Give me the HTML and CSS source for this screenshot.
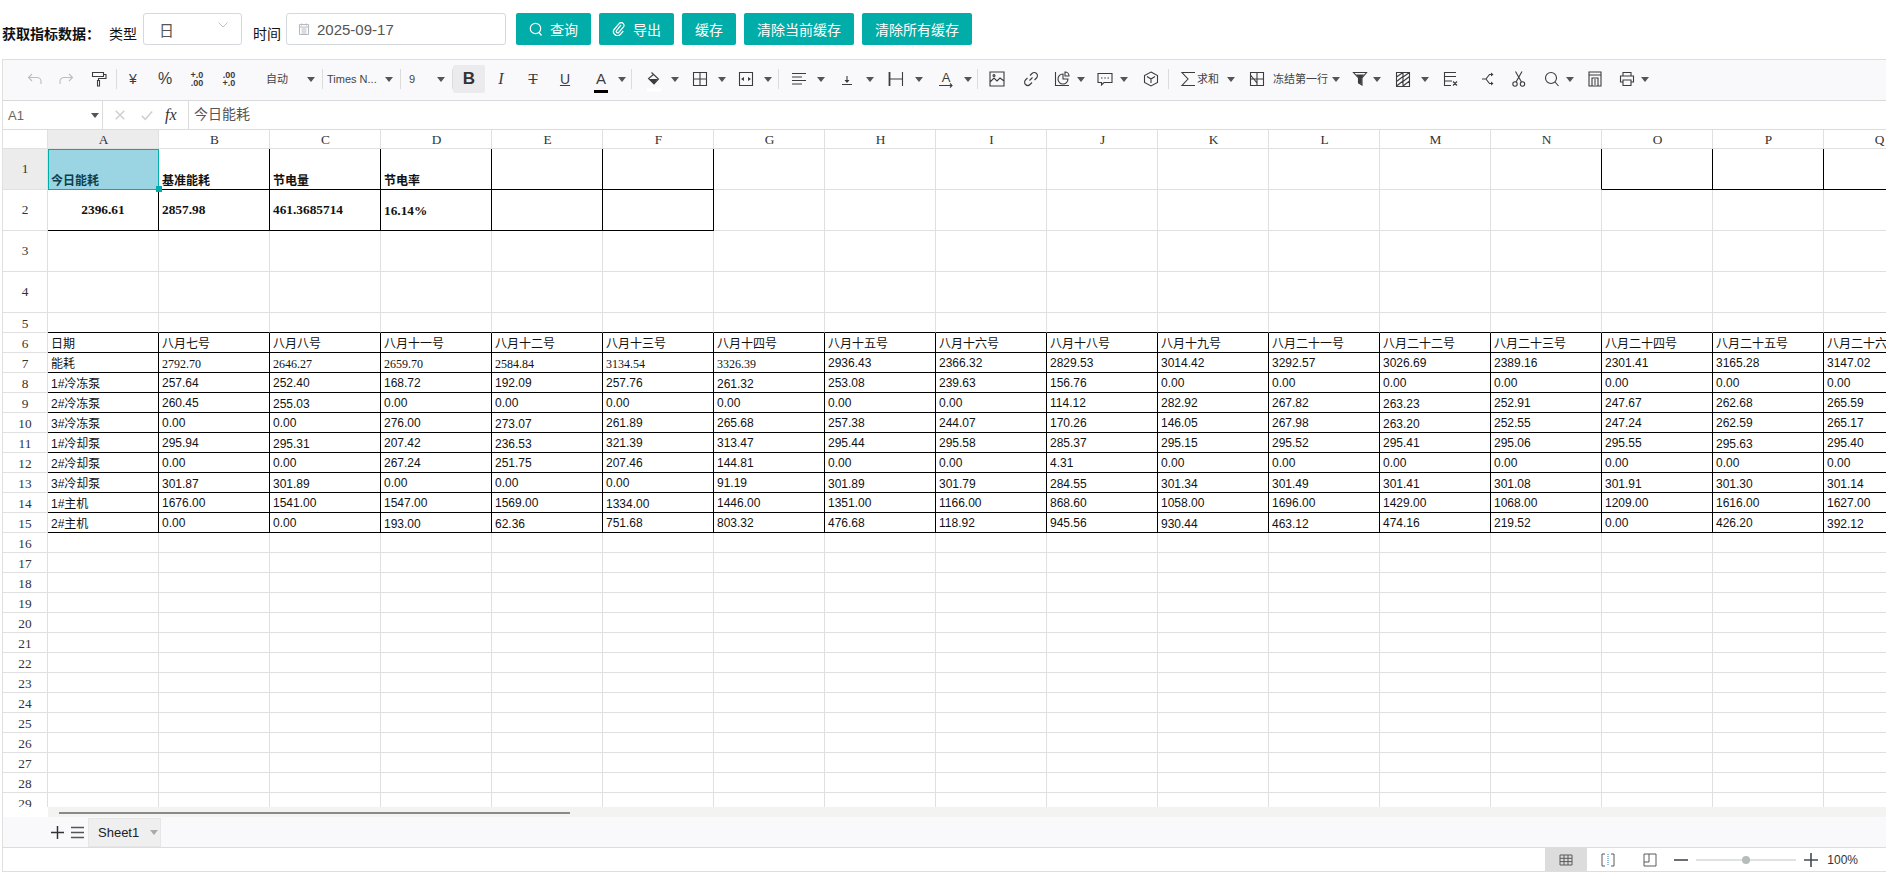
FILE: index.html
```html
<!DOCTYPE html>
<html lang="zh">
<head>
<meta charset="utf-8">
<title>获取指标数据</title>
<link rel="stylesheet" href="styles.css">
</head>
<body>
<div class="filter">
  <span class="title">获取指标数据：</span>
  <span class="lbl lbl-type">类型</span>
  <div class="select"><span>日</span><svg class="chev" viewBox="0 0 10 6"><path d="M.5.5 5 5 9.5.5"/></svg></div>
  <span class="lbl lbl-time">时间</span>
  <div class="date"><svg class="cal" viewBox="0 0 12 12"><path d="M1.5 1.5h9v10h-9zM1.5 4h9M3.5 6h5M3.5 8h5M3.5 10h5M3.5.5v2M8.5.5v2"/></svg><span>2025-09-17</span></div>
  <button class="btn btn-first"><svg class="bi" viewBox="0 0 14 14"><circle cx="6.5" cy="6.5" r="5.2"/><path d="m10 10.500 2.500 3"/></svg>查询</button>
  <button class="btn"><svg class="bi" viewBox="0 0 14 14"><path d="M9 3 4.500 8.500a1.500 1.500 0 0 0 2.200 2L11.500 5a2.800 2.800 0 0 0-4-3.800L2.500 7a4 4 0 0 0 5.800 5.500l3-3.500"/></svg>导出</button>
  <button class="btn">缓存</button>
  <button class="btn">清除当前缓存</button>
  <button class="btn">清除所有缓存</button>
</div>

<div class="sheet">
  <div class="toolbar">
    <svg class="ic off m24" viewBox="0 0 16 16"><path d="M5 3 1.500 6.500 5 10M1.500 6.500H10a4 4 0 0 1 4 4V13"/></svg>
    <svg class="ic off m15" viewBox="0 0 16 16"><path d="M11 3l3.500 3.500L11 10M14.500 6.500H6a4 4 0 0 0-4 4V13"/></svg>
    <svg class="ic m17" viewBox="0 0 16 16"><path d="M1.500 1.500h11v4h-11zM12.500 3.500h2.500v4H7.500v2M6.500 9.500h2v5.500h-2z"/></svg>
    <i class="sep m9"></i>
    <span class="g g-yen m8">¥</span>
    <span class="g g-pct m16">%</span>
    <span class="g g-dec m16"><b>+.0</b><b>.00</b></span>
    <span class="g g-dec m16"><b>.00</b><b>+.0</b></span>
    <span class="t w21 m29">自动</span>
    <i class="ar m20"></i>
    <i class="sep m7"></i>
    <span class="t w51 m4">Times N...</span>
    <i class="ar m7"></i>
    <i class="sep m7"></i>
    <span class="t w6 m8">9</span>
    <i class="ar m22"></i>
    <i class="sep m7"></i>
    <span class="bold-on">B</span>
    <span class="g g-i m8">I</span>
    <span class="g g-s m16">T</span>
    <span class="g g-u m16">U</span>
    <span class="g g-a m20">A<i class="bar"></i></span>
    <i class="ar m9"></i>
    <i class="sep m5"></i>
    <svg class="ic m14" viewBox="0 0 16 16"><path d="M5.500 1.500 12.500 8 8 13 2.500 7.500l5-4"/><path class="fill" d="M3 8h9L8 13z"/><path class="white" d="M1 19h14"/></svg>
    <i class="ar m9"></i>
    <svg class="ic m13" viewBox="0 0 16 16"><path d="M1.500 1.500h13v13h-13zM8 1.500v13M1.500 8h13"/></svg>
    <i class="ar m10"></i>
    <svg class="ic m12" viewBox="0 0 16 16"><path d="M1.500 1.500h13v13h-13z"/><path class="fill" d="M3 8l3-2v4zM13 8l-3-2v4z"/></svg>
    <i class="ar m10"></i>
    <i class="sep m6"></i>
    <svg class="ic m12" viewBox="0 0 16 16"><path d="M1 2.500h14M1 6h10M1 9.500h14M1 13h10"/></svg>
    <i class="ar m10"></i>
    <svg class="ic m14" viewBox="0 0 16 16"><path d="M3 13.500h10M8 5v6"/><path class="fill" d="M5.500 9h5L8 12z"/></svg>
    <i class="ar m11"></i>
    <svg class="ic m14" viewBox="0 0 16 16"><path class="heavy" d="M1.500 1v14"/><path d="M14.500 1v14M1.500 8h13"/></svg>
    <i class="ar m11"></i>
    <svg class="ic m15" viewBox="0 0 16 16"><text class="svgt" x="8" y="11" text-anchor="middle">A</text><path d="M1 14.500h13M12 12.500l2 2-2 2"/></svg>
    <i class="ar m10"></i>
    <i class="sep m5"></i>
    <svg class="ic m11" viewBox="0 0 16 16"><path d="M1 1h14v14H1zM1 11l4-4 3 3 3-3 4 3"/><circle cx="5" cy="4.500" r="1"/></svg>
    <svg class="ic m18" viewBox="0 0 16 16"><path d="M6.500 9.500l3-3M7 4.500l2-2a3 3 0 0 1 4.500 4.500l-2 2M9 11.500l-2 2A3 3 0 0 1 2.500 9l2-2"/></svg>
    <svg class="ic m15" viewBox="0 0 16 16"><path d="M1.500 1v13.500H15M9 3a5 5 0 1 0 5 5H9zM11 1a4 4 0 0 1 4 4h-4z"/></svg>
    <i class="ar m7"></i>
    <svg class="ic m12" viewBox="0 0 16 16"><path d="M1 2.500h14v9H7L4.500 14v-2.500H1z"/><path d="M4 7h1.500M7.300 7h1.500M10.500 7H12"/></svg>
    <i class="ar m7"></i>
    <svg class="ic m15" viewBox="0 0 16 16"><path d="M8 1l6.500 3.500v7L8 15l-6.500-3.500v-7zM4 5.500 8 8l4-2.500M8 8v4"/></svg>
    <i class="sep m9"></i>
    <svg class="ic m11" viewBox="0 0 16 16"><path d="M15 1.500H2L8 8l-6 6.500h13"/></svg>
    <span class="t w22 m1">求和</span>
    <i class="ar m8"></i>
    <svg class="ic m14" viewBox="0 0 16 16"><path d="M1.500 1.500h13v13h-13zM8 1.500v13M1.500 8h13M1.500 4 8 12"/></svg>
    <span class="t w55 m8">冻结第一行</span>
    <i class="ar m4"></i>
    <svg class="ic m12" viewBox="0 0 16 16"><path d="M1.500 1.500h13L10 7v7l-3.500-2V7z"/><path class="fill" d="M4 3.500h8L9.800 7v6.500l-3-1.700V7z"/></svg>
    <i class="ar m5"></i>
    <svg class="ic m14" viewBox="0 0 16 16"><path d="M1.500 1.500h13v14h-13zM8 1.500v14M8 6l6.500-4.500M8 10.500l6.500-5M8 15l6.500-5M1.500 6 8 1.500M1.500 10.500 8 5.500M1.500 15 8 10"/></svg>
    <i class="ar m10"></i>
    <svg class="ic m14" viewBox="0 0 16 16"><path d="M13 1.500H1.500v13H8M1.500 5.500H13M1.500 10H9M10 10.500l4 4M14 10.500l-4 4"/></svg>
    <svg class="ic m20" viewBox="0 0 16 16"><path d="M13 3.500h-2.500L7 8l3.500 4.500H13M3 8h4"/><path class="fill" d="M12 1.500l2.500 2-2.500 2zM12 10.500l2.500 2-2.500 2z"/></svg>
    <svg class="ic m16" viewBox="0 0 16 16"><circle cx="4" cy="13" r="2.200"/><circle cx="11.500" cy="13" r="2.200"/><path d="M5 11 11 .5M10.500 11 4.500.5"/></svg>
    <svg class="ic m17" viewBox="0 0 16 16"><circle cx="7" cy="7" r="5.500"/><path d="m11 11 3.500 4"/></svg>
    <i class="ar m6"></i>
    <svg class="ic m13" viewBox="0 0 16 16"><path d="M2 1h12v14H2zM2 4h12M5 15V7h6v8M7 9h2M7 11h2M7 13h2"/></svg>
    <svg class="ic m16" viewBox="0 0 16 16"><path d="M4 5V1.500h8V5M4 11H1.500V5h13v6H12M4 9h8v5.500H4z"/></svg>
    <i class="ar m6"></i>
  </div>

  <div class="formula">
    <div class="name"><span>A1</span><i class="ar"></i></div>
    <div class="fx-tools">
      <svg class="fxi" viewBox="0 0 14 14"><path d="m2 2 10 10M12 2 2 12"/></svg>
      <svg class="fxi chk" viewBox="0 0 14 14"><path d="m1 8 4 4 8-9"/></svg>
      <span class="fx">fx</span>
    </div>
    <div class="fval">今日能耗</div>
  </div>

  <div class="grid">
    <div class="row hdr"><div class="rh"></div><div class="cells">
      <div class="c ch on">A</div><div class="c ch">B</div><div class="c ch">C</div><div class="c ch">D</div><div class="c ch">E</div><div class="c ch">F</div><div class="c ch">G</div><div class="c ch">H</div><div class="c ch">I</div><div class="c ch">J</div><div class="c ch">K</div><div class="c ch">L</div><div class="c ch">M</div><div class="c ch">N</div><div class="c ch">O</div><div class="c ch">P</div><div class="c ch">Q</div>
    </div></div>

    <div class="row tall"><div class="rh on">1</div><div class="cells">
      <div class="c sel b">今日能耗<i class="handle"></i></div><div class="c k b">基准能耗</div><div class="c k b">节电量</div><div class="c k b">节电率</div><div class="c k"></div><div class="c k"></div>
      <div class="c"></div><div class="c"></div><div class="c"></div><div class="c"></div><div class="c"></div><div class="c"></div><div class="c"></div><div class="c kr"></div><div class="c k"></div><div class="c k"></div><div class="c k"></div>
    </div></div>
    <div class="row tall"><div class="rh">2</div><div class="cells">
      <div class="c k v ctr">2396.61</div><div class="c k v">2857.98</div><div class="c k v">461.3685714</div><div class="c k v v1">16.14%</div><div class="c k"></div><div class="c k"></div>
    </div></div>
    <div class="row tall"><div class="rh">3</div><div class="cells"></div></div>
    <div class="row tall"><div class="rh">4</div><div class="cells"></div></div>
    <div class="row"><div class="rh">5</div><div class="cells">
      <div class="c kb"></div><div class="c kb"></div><div class="c kb"></div><div class="c kb"></div><div class="c kb"></div><div class="c kb"></div><div class="c kb"></div><div class="c kb"></div><div class="c kb"></div><div class="c kb"></div><div class="c kb"></div><div class="c kb"></div><div class="c kb"></div><div class="c kb"></div><div class="c kb"></div><div class="c kb"></div><div class="c kb"></div>
    </div></div>
    <div class="row"><div class="rh">6</div><div class="cells">
      <div class="c k cjk">日期</div><div class="c k cjk">八月七号</div><div class="c k cjk">八月八号</div><div class="c k cjk">八月十一号</div><div class="c k cjk">八月十二号</div><div class="c k cjk">八月十三号</div><div class="c k cjk">八月十四号</div><div class="c k cjk">八月十五号</div><div class="c k cjk">八月十六号</div><div class="c k cjk">八月十八号</div><div class="c k cjk">八月十九号</div><div class="c k cjk">八月二十一号</div><div class="c k cjk">八月二十二号</div><div class="c k cjk">八月二十三号</div><div class="c k cjk">八月二十四号</div><div class="c k cjk">八月二十五号</div><div class="c k cjk">八月二十六号</div>
    </div></div>
    <div class="row"><div class="rh">7</div><div class="cells">
      <div class="c k cjk">能耗</div><div class="c k serif">2792.70</div><div class="c k serif">2646.27</div><div class="c k serif">2659.70</div><div class="c k serif">2584.84</div><div class="c k serif">3134.54</div><div class="c k serif">3326.39</div><div class="c k">2936.43</div><div class="c k">2366.32</div><div class="c k">2829.53</div><div class="c k">3014.42</div><div class="c k">3292.57</div><div class="c k">3026.69</div><div class="c k">2389.16</div><div class="c k">2301.41</div><div class="c k">3165.28</div><div class="c k">3147.02</div>
    </div></div>
    <div class="row"><div class="rh">8</div><div class="cells">
      <div class="c k cjk">1#冷冻泵</div><div class="c k">257.64</div><div class="c k">252.40</div><div class="c k">168.72</div><div class="c k">192.09</div><div class="c k">257.76</div><div class="c k lo">261.32</div><div class="c k">253.08</div><div class="c k">239.63</div><div class="c k">156.76</div><div class="c k">0.00</div><div class="c k">0.00</div><div class="c k">0.00</div><div class="c k">0.00</div><div class="c k">0.00</div><div class="c k">0.00</div><div class="c k">0.00</div>
    </div></div>
    <div class="row"><div class="rh">9</div><div class="cells">
      <div class="c k cjk">2#冷冻泵</div><div class="c k">260.45</div><div class="c k lo">255.03</div><div class="c k">0.00</div><div class="c k">0.00</div><div class="c k">0.00</div><div class="c k">0.00</div><div class="c k">0.00</div><div class="c k">0.00</div><div class="c k">114.12</div><div class="c k">282.92</div><div class="c k">267.82</div><div class="c k lo">263.23</div><div class="c k">252.91</div><div class="c k">247.67</div><div class="c k">262.68</div><div class="c k">265.59</div>
    </div></div>
    <div class="row"><div class="rh">10</div><div class="cells">
      <div class="c k cjk">3#冷冻泵</div><div class="c k">0.00</div><div class="c k">0.00</div><div class="c k">276.00</div><div class="c k lo">273.07</div><div class="c k">261.89</div><div class="c k">265.68</div><div class="c k">257.38</div><div class="c k">244.07</div><div class="c k">170.26</div><div class="c k">146.05</div><div class="c k">267.98</div><div class="c k lo">263.20</div><div class="c k">252.55</div><div class="c k">247.24</div><div class="c k">262.59</div><div class="c k">265.17</div>
    </div></div>
    <div class="row"><div class="rh">11</div><div class="cells">
      <div class="c k cjk">1#冷却泵</div><div class="c k">295.94</div><div class="c k lo">295.31</div><div class="c k">207.42</div><div class="c k lo">236.53</div><div class="c k">321.39</div><div class="c k">313.47</div><div class="c k">295.44</div><div class="c k">295.58</div><div class="c k">285.37</div><div class="c k">295.15</div><div class="c k">295.52</div><div class="c k">295.41</div><div class="c k">295.06</div><div class="c k">295.55</div><div class="c k lo">295.63</div><div class="c k">295.40</div>
    </div></div>
    <div class="row"><div class="rh">12</div><div class="cells">
      <div class="c k cjk">2#冷却泵</div><div class="c k">0.00</div><div class="c k">0.00</div><div class="c k">267.24</div><div class="c k">251.75</div><div class="c k">207.46</div><div class="c k">144.81</div><div class="c k">0.00</div><div class="c k">0.00</div><div class="c k">4.31</div><div class="c k">0.00</div><div class="c k">0.00</div><div class="c k">0.00</div><div class="c k">0.00</div><div class="c k">0.00</div><div class="c k">0.00</div><div class="c k">0.00</div>
    </div></div>
    <div class="row"><div class="rh">13</div><div class="cells">
      <div class="c k cjk">3#冷却泵</div><div class="c k lo">301.87</div><div class="c k lo">301.89</div><div class="c k">0.00</div><div class="c k">0.00</div><div class="c k">0.00</div><div class="c k">91.19</div><div class="c k lo">301.89</div><div class="c k lo">301.79</div><div class="c k lo">284.55</div><div class="c k lo">301.34</div><div class="c k lo">301.49</div><div class="c k lo">301.41</div><div class="c k lo">301.08</div><div class="c k lo">301.91</div><div class="c k lo">301.30</div><div class="c k lo">301.14</div>
    </div></div>
    <div class="row"><div class="rh">14</div><div class="cells">
      <div class="c k cjk">1#主机</div><div class="c k">1676.00</div><div class="c k">1541.00</div><div class="c k">1547.00</div><div class="c k">1569.00</div><div class="c k lo">1334.00</div><div class="c k">1446.00</div><div class="c k">1351.00</div><div class="c k">1166.00</div><div class="c k">868.60</div><div class="c k">1058.00</div><div class="c k">1696.00</div><div class="c k">1429.00</div><div class="c k">1068.00</div><div class="c k">1209.00</div><div class="c k">1616.00</div><div class="c k">1627.00</div>
    </div></div>
    <div class="row"><div class="rh">15</div><div class="cells">
      <div class="c k cjk">2#主机</div><div class="c k">0.00</div><div class="c k">0.00</div><div class="c k lo">193.00</div><div class="c k lo">62.36</div><div class="c k">751.68</div><div class="c k">803.32</div><div class="c k">476.68</div><div class="c k">118.92</div><div class="c k">945.56</div><div class="c k lo">930.44</div><div class="c k lo">463.12</div><div class="c k">474.16</div><div class="c k">219.52</div><div class="c k">0.00</div><div class="c k">426.20</div><div class="c k lo">392.12</div>
    </div></div>
    <div class="row"><div class="rh">16</div><div class="cells"></div></div>
    <div class="row"><div class="rh">17</div><div class="cells"></div></div>
    <div class="row"><div class="rh">18</div><div class="cells"></div></div>
    <div class="row"><div class="rh">19</div><div class="cells"></div></div>
    <div class="row"><div class="rh">20</div><div class="cells"></div></div>
    <div class="row"><div class="rh">21</div><div class="cells"></div></div>
    <div class="row"><div class="rh">22</div><div class="cells"></div></div>
    <div class="row"><div class="rh">23</div><div class="cells"></div></div>
    <div class="row"><div class="rh">24</div><div class="cells"></div></div>
    <div class="row"><div class="rh">25</div><div class="cells"></div></div>
    <div class="row"><div class="rh">26</div><div class="cells"></div></div>
    <div class="row"><div class="rh">27</div><div class="cells"></div></div>
    <div class="row"><div class="rh">28</div><div class="cells"></div></div>
    <div class="row"><div class="rh">29</div><div class="cells"></div></div>
  </div>

  <div class="hscroll"><div class="track"><i class="thumb"></i></div></div>

  <div class="tabs">
    <svg class="tab-ic" viewBox="0 0 14 14"><path d="M7 0v14M0 7h14"/></svg>
    <svg class="tab-ic menu" viewBox="0 0 14 14"><path d="M0 1.500h14M0 7h14M0 12.500h14"/></svg>
    <div class="tab"><span>Sheet1</span><i class="ar ar-light"></i></div>
  </div>

  <div class="status">
    <div class="view view-on"><svg class="vi" viewBox="0 0 14 14"><path d="M1 2h12v10H1zM1 5.300h12M1 8.600h12M5 2v10M9 2v10"/></svg></div>
    <div class="view"><svg class="vi" viewBox="0 0 14 14"><path d="M4 1H1v12h3M10 1h3v12h-3"/><path class="dots" d="M7 1v12"/></svg></div>
    <div class="view"><svg class="vi" viewBox="0 0 14 14"><path d="M1 1h12v12H1zM1 9h5V1"/></svg></div>
    <svg class="zm zm-minus" viewBox="0 0 14 14"><path d="M0 7h14"/></svg>
    <div class="slider"><i class="knob"></i></div>
    <svg class="zm zm-plus" viewBox="0 0 14 14"><path d="M7 0v14M0 7h14"/></svg>
    <span class="pct">100%</span>
  </div>
</div>
</body>
</html>
```
FILE: styles.css
```css
html, body { margin: 0; padding: 0; height: 878px; overflow: hidden; background: #fff; }
body { font-family: "Liberation Sans", "Noto Sans CJK SC", sans-serif; color: #333; }
i { display: block; font-style: normal; }

/* filter bar */
.filter { display: flex; align-items: flex-start; height: 59px; box-sizing: border-box; padding: 13px 0 0 2px; color: #111; }
.title { width: 98px; margin-top: 11px; font-size: 14px; line-height: 20px; font-weight: 700; white-space: nowrap; }
.lbl { width: 28px; margin-top: 11px; font-size: 14px; line-height: 20px; white-space: nowrap; }
.lbl-type { margin-left: 9px; }
.lbl-time { margin-left: 11px; }
.select, .date { display: flex; align-items: center; height: 32px; box-sizing: border-box; border: 1px solid #d5d8dd; border-radius: 3px; font-size: 15px; color: #555; }
.select { width: 99px; margin-left: 6px; padding-left: 15px; position: relative; }
.chev { width: 10px; height: 6px; margin-left: 44px; margin-top: -8px; fill: none; stroke: #c0c4cc; stroke-width: 1; }
.date { width: 220px; margin-left: 5px; padding-left: 11px; }
.cal { width: 12px; height: 12px; margin-right: 7px; fill: none; stroke: #b5b8be; stroke-width: 1; }
.btn { display: flex; align-items: center; height: 32px; margin-left: 8px; padding: 0 13px; border: 0; border-radius: 2px; background: #00ada8; color: #fff; font: 14px "Liberation Sans", "Noto Sans CJK SC", sans-serif; white-space: nowrap; }
.btn-first { margin-left: 10px; }
.bi { width: 14px; height: 14px; margin-right: 7px; fill: none; stroke: #fff; stroke-width: 1.200; }

/* sheet frame */
.sheet { display: flex; flex-direction: column; height: 813px; margin-left: 2px; box-sizing: border-box; border-left: 1px solid #e0e0e0; border-top: 1px solid #dedede; border-bottom: 1px solid #dedede; }

/* toolbar */
.toolbar { display: flex; align-items: center; height: 41px; flex: none; box-sizing: border-box; padding-bottom: 3px; background: #f9f9fb; border-bottom: 1px solid #d9d9d9; color: #444; font-size: 11px; }
.ic { width: 16px; height: 16px; flex: none; overflow: visible; fill: none; stroke: #3c3c3c; stroke-width: 1.100; }
.ic.off { stroke: #bdbdbd; }
.ic .fill { fill: #3c3c3c; stroke: none; }
.ic .white { stroke: #fff; stroke-width: 3; }
.ic .heavy { stroke-width: 1.800; }
.svgt { font: 13px "Liberation Sans", sans-serif; fill: #3c3c3c; stroke: none; }
.sep { width: 1px; height: 20px; flex: none; background: #dcdcdc; }
.ar { width: 0; height: 0; flex: none; margin-top: 1px; border-top: 5px solid #555; border-left: 4px solid transparent; border-right: 4px solid transparent; }
.ar-light { border-top-color: #aaa; }
.t { flex: none; white-space: nowrap; font-size: 11px; line-height: 16px; margin-top: 1px; color: #444; }
.w6 { width: 6px; } .w21 { width: 21px; } .w22 { width: 22px; } .w51 { width: 51px; } .w55 { width: 55px; }
.g { flex: none; width: 16px; text-align: center; line-height: 16px; color: #3c3c3c; position: relative; }
.g-yen { font-size: 14px; }
.g-pct { font-size: 16px; }
.g-dec { display: flex; flex-direction: column; font-size: 9px; line-height: 8px; }
.g-i { font: italic 16px/16px "Liberation Serif", serif; }
.g-s { font: 15px/16px "Liberation Serif", serif; text-decoration: line-through; text-decoration-thickness: 1px; }
.g-u { font-size: 14px; text-decoration: underline; text-decoration-thickness: 1px; }
.g-a { font-size: 15px; }
.bar { position: absolute; left: 1px; top: 19px; width: 14px; height: 3px; background: #000; }
.bold-on { flex: none; width: 32px; height: 28px; border-radius: 2px; margin-top: 1px; background: #ebebed; font-size: 17px; font-weight: 700; line-height: 28px; text-align: center; color: #333; }
.m1 { margin-left: 1px; } .m4 { margin-left: 4px; } .m5 { margin-left: 5px; } .m6 { margin-left: 6px; }
.m7 { margin-left: 7px; } .m8 { margin-left: 8px; } .m9 { margin-left: 9px; } .m10 { margin-left: 10px; }
.m11 { margin-left: 11px; } .m12 { margin-left: 12px; } .m13 { margin-left: 13px; } .m14 { margin-left: 14px; }
.m15 { margin-left: 15px; } .m16 { margin-left: 16px; } .m17 { margin-left: 17px; } .m18 { margin-left: 18px; }
.m20 { margin-left: 20px; } .m22 { margin-left: 22px; } .m24 { margin-left: 24px; } .m29 { margin-left: 29px; }

/* formula bar */
.formula { display: flex; height: 29px; flex: none; box-sizing: border-box; border-bottom: 1px solid #dcdcdc; color: #666; }
.name { display: flex; align-items: center; justify-content: space-between; width: 100px; box-sizing: border-box; padding: 0 3px 0 5px; border-right: 1px solid #dcdcdc; font-size: 13px; }
.fx-tools { display: flex; align-items: center; width: 86px; box-sizing: border-box; padding-left: 11px; border-right: 1px solid #dcdcdc; }
.fxi { width: 12px; height: 12px; fill: none; stroke: #d0d0d0; stroke-width: 1.800; }
.chk { width: 14px; margin-left: 14px; }
.fx { margin-left: 11px; font: italic 16px "Liberation Serif", serif; color: #333; }
.fval { padding-left: 5px; font-size: 14px; line-height: 27px; color: #555; }

/* grid */
.grid { flex: 1; min-height: 0; overflow: hidden; font-size: 12px; color: #111; }
.row { display: flex; height: 20px; }
.hdr { height: 19px; }
.tall { height: 41px; }
.rh { flex: none; width: 45px; box-sizing: border-box; border-right: 1px solid #e0e0e0; border-bottom: 1px solid #e0e0e0; text-align: center; font: 13.330px/21px "Liberation Serif", serif; color: #333; }
.tall .rh { line-height: 40px; }
.rh.on, .ch.on { background: #ececec; }
.cells { display: flex; flex: none; width: 1887px; background:
  repeating-linear-gradient(to right, transparent 0 110px, #e0e0e0 110px 111px),
  linear-gradient(#e0e0e0, #e0e0e0) left bottom / 100% 1px no-repeat; }
.c { flex: none; width: 111px; height: 100%; box-sizing: border-box; padding: 1px 3px 0; border-right: 1px solid transparent; border-bottom: 1px solid transparent; line-height: 19px; white-space: nowrap; }
.k { border-right-color: #000; border-bottom-color: #000; }
.kb { border-bottom-color: #000; }
.kr { border-right-color: #000; }
.lo { padding-top: 2px; }
.cjk { padding-top: 2px; }
.serif { padding-top: 2px; font-family: "Liberation Serif", serif; }
.ch { padding: 1px 0 0 1px; border-right-color: #e0e0e0; border-bottom-color: #e0e0e0; text-align: center; font: 13.330px/18px "Liberation Serif", serif; color: #333; }
.b { padding-top: 24px; font-weight: 700; font-size: 12px; line-height: 16px; }
.v { padding-top: 0; font: 700 13.330px/40px "Liberation Serif", serif; }
.v1 { padding-top: 1px; }
.ctr { text-align: center; }
.sel { position: relative; background: #9bd4e2; color: #0d3f4a; outline: 1px solid #00ada8; outline-offset: -1px; }
.handle { position: absolute; left: 108px; top: 37px; width: 6px; height: 6px; background: #00ada8; z-index: 2; }

/* bottom bars */
.hscroll { flex: none; height: 10px; padding-left: 45px; background: #fff; }
.track { height: 10px; padding: 5px 0 0 11px; box-sizing: border-box; background: #f3f3f1; }
.thumb { width: 511px; height: 2px; background: #8a8a8a; }
.tabs { display: flex; align-items: center; flex: none; height: 31px; box-sizing: border-box; padding-left: 48px; background: #f9f9fb; border-bottom: 1px solid #dcdcdc; }
.tab-ic { width: 13px; height: 13px; fill: none; stroke: #333; stroke-width: 1.600; }
.menu { margin-left: 7px; stroke: #555; }
.tab { display: flex; align-items: center; width: 73px; height: 29px; margin-left: 4px; box-sizing: border-box; padding-left: 9px; background: #efefef; border: 1px solid #e6e6e6; font-size: 13px; color: #222; }
.tab .ar { margin-left: 11px; }
.status { display: flex; align-items: center; flex: none; height: 23px; justify-content: flex-end; padding-right: 28px; }
.view { display: flex; align-items: center; justify-content: center; width: 42px; height: 100%; }
.view-on { background: #dcdcdc; }
.vi { width: 14px; height: 14px; fill: none; stroke: #5a5a5a; stroke-width: 1; }
.dots { stroke: #8fc1dd; stroke-dasharray: 1 1; stroke-width: 2; }
.zm { width: 14px; height: 14px; fill: none; stroke: #454b55; stroke-width: 1.600; }
.zm-minus { margin-left: 3px; }
.slider { position: relative; width: 100px; height: 2px; margin-left: 8px; background: #dfe2e4; }
.knob { position: absolute; left: 46px; top: -3px; width: 8px; height: 8px; border-radius: 50%; background: #b4bdb9; }
.zm-plus { margin-left: 8px; }
.pct { margin-left: 9px; font-size: 12px; color: #333; }
```
